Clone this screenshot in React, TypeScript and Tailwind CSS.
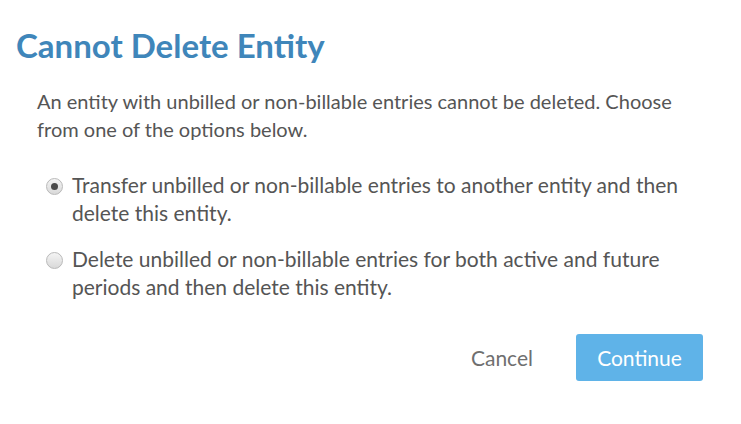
import React, { useState } from "react";

const options = [
  {
    id: "transfer",
    label:
      "Transfer unbilled or non-billable entries to another entity and then delete this entity.",
  },
  {
    id: "delete",
    label:
      "Delete unbilled or non-billable entries for both active and future periods and then delete this entity.",
  },
];

const Radio = ({ checked }: { checked: boolean }) => (
  <span className="mt-[7px] flex h-[17px] w-[17px] shrink-0 items-center justify-center rounded-full border border-[#b9b9b9] bg-gradient-to-b from-[#f4f4f4] to-[#d9d9d9]">
    {checked ? (
      <span className="h-[7px] w-[7px] rounded-full bg-[#4a4a4a]" />
    ) : null}
  </span>
);

export default function App() {
  const [choice, setChoice] = useState("transfer");

  return (
    <div
      className="h-[424px] w-[741px] bg-white"
      style={{ fontFamily: "Lato, 'Open Sans', sans-serif" }}
    >
      <h1 className="pl-[16px] pt-[25px] text-[33px] font-bold leading-[40px] text-[#3f86ba]">
        Cannot Delete Entity
      </h1>
      <div className="pl-[37px] pr-[38px] pt-[22px] text-[20px] leading-[28px] text-[#555555]">
        <p>
          An entity with unbilled or non-billable entries cannot be deleted.
          Choose from one of the options below.
        </p>
        <div className="mt-[28px] flex flex-col gap-[18px] pl-[9px] text-[21px]">
          {options.map((o) => (
            <label
              key={o.id}
              className="flex cursor-pointer items-start gap-[9px]"
              onClick={() => setChoice(o.id)}
            >
              <Radio checked={choice === o.id} />
              <span>{o.label}</span>
            </label>
          ))}
        </div>
        <div className="mt-[33px] flex items-center justify-end gap-[43px]">
          <button className="text-[21px] text-[#6f6f6f]">Cancel</button>
          <button className="h-[47px] w-[127px] rounded-[3px] bg-[#5fb3e8] text-[21px] text-white">
            Continue
          </button>
        </div>
      </div>
    </div>
  );
}
